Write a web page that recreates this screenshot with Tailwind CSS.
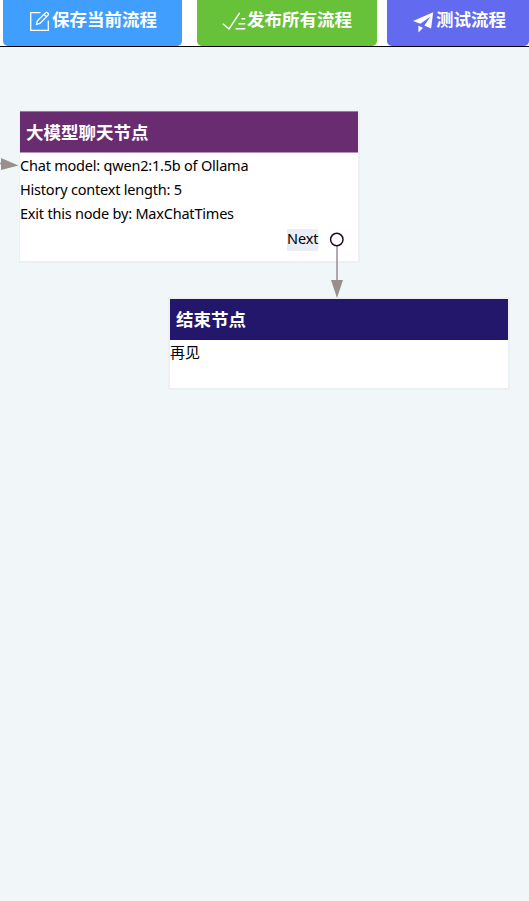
<!DOCTYPE html>
<html lang="zh-CN">
<head>
<meta charset="utf-8">
<title>流程编辑</title>
<script src="https://cdn.jsdelivr.net/npm/@tailwindcss/browser@4"></script>
</head>
<body class="relative h-screen overflow-hidden bg-[#f1f6f9] font-['Noto_Sans','Noto_Sans_CJK_SC',sans-serif] text-black">
  <header class="flex h-[47px] w-full items-start overflow-hidden border-b border-black bg-white pl-[3px] font-['Noto_Sans_CJK_SC',sans-serif] text-[17.5px] leading-[26px] font-bold text-white">
    <button class="flex h-[46px] w-[179px] shrink-0 items-start rounded-b-[5px] bg-[#409eff] pt-[6px] pl-[26px]">
      <svg class="mt-[5px] mr-[2px] h-[21px] w-[21px] shrink-0" viewBox="0 0 21 21" fill="none" stroke="#fff" stroke-width="1.3"><path d="M11.5 1.600H1.700v17.700h17.600V9.500M7.500 13.400l.9-3.500 8.200-8.200c1.500-1.200 3.600 1 2.500 2.500l-8.200 8.200zM15 3.300l2.500 2.500"/></svg>
      <span>保存当前流程</span>
    </button>
    <button class="ml-[15px] flex h-[46px] w-[180px] shrink-0 items-start rounded-b-[5px] bg-[#67c23a] pt-[6px] pl-[25px]">
      <svg class="mt-[6px] h-[18px] w-[25px] shrink-0" viewBox="0 0 25 18" fill="none" stroke="#fff" stroke-width="1.4"><path d="M.8 11.700 7 17 17.700.9M19.500 6.700h3.800M16.500 11.700h6.800M13.500 16.700h9.800"/></svg>
      <span>发布所有流程</span>
    </button>
    <button class="ml-[10px] flex h-[46px] flex-1 items-start rounded-b-[5px] bg-[#626aef] pt-[6px] pl-[26px]">
      <svg class="mt-[6px] mr-[2px] h-[21px] w-[21px] shrink-0" viewBox="0 0 21 21" fill="#fff"><path d="M20.200.2 18.100 16.600 11.300 13.500 17.600 4.400 7.400 11.800 0 9.100zM5.300 13.700l4.700 2.100-4.500 4.700z"/></svg>
      <span class="whitespace-nowrap">测试流程</span>
    </button>
  </header>

  <main>
    <section class="absolute top-[110px] left-[19px] h-[153px] w-[341px] border-2 border-t border-l border-[#eeeff1] bg-white">
      <h2 class="h-[42px] border-y border-t-[#9c7a9f] border-b-[#b295b5] bg-[#6a2c70] pl-[6px] font-['Noto_Sans_CJK_SC',sans-serif] text-[17.5px] leading-[40px] font-bold text-white">大模型聊天节点</h2>
      <div class="text-[14.5px] leading-6 whitespace-nowrap">
        <p><span class="tracking-[-0.21px]">Chat model: qwen2:1.5b of Ollama</span></p>
        <p><span class="tracking-[-0.21px]">History context length: 5</span></p>
        <p><span class="tracking-[-0.21px]">Exit this node by: MaxChatTimes</span></p>
      </div>
      <div class="mt-[4px] ml-[267px] h-[22px] w-[31px] bg-[#e9edf5] text-[14.5px] leading-[18px] tracking-[-0.1px]">Next</div>
    </section>

    <section class="absolute top-[297px] left-[168px] h-[93px] w-[342px] border-2 border-[#eeeff1] bg-white">
      <h2 class="h-[41px] bg-[#22176a] pl-[6px] font-['Noto_Sans_CJK_SC',sans-serif] text-[17.5px] leading-[39px] font-bold text-white">结束节点</h2>
      <p class="font-['Noto_Sans_CJK_SC',sans-serif] text-[15px] leading-6">再见</p>
    </section>

    <svg class="absolute top-0 left-0 h-[901px] w-[529px]" viewBox="0 0 529 901">
      <path d="M0 163.500h3M337 246v36" stroke="#a1929e" stroke-width="1.6"/>
      <path d="M1 158 18.500 165.500 1 170zM331 280h12l-6 18z" fill="#998f8d"/>
      <circle cx="336.800" cy="239.500" r="6.200" fill="#fff" stroke="#210a25" stroke-width="1.500"/>
    </svg>
  </main>
</body>
</html>
